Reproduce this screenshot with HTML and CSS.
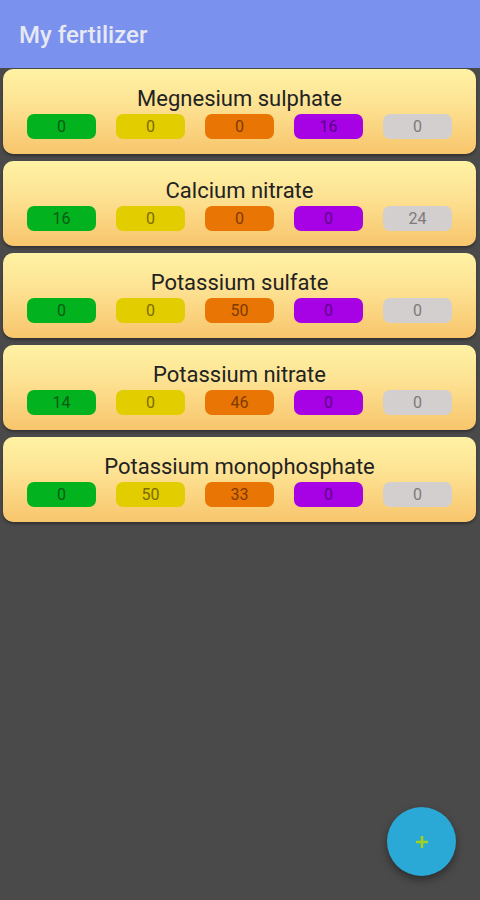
FILE: index.html
```html
<!DOCTYPE html>
<html lang="en">
<head>
    <meta charset="UTF-8">
    <meta name="viewport" content="width=device-width, initial-scale=1.0">
    <title>My fertilizer</title>
    <link rel="stylesheet" href="styles.css">
</head>
<body>
    <header class="app-bar">
        <h1>My fertilizer</h1>
    </header>

    <main class="list">
        <div class="card">
            <div class="card-title">Megnesium sulphate</div>
            <div class="pills">
                <span class="pill green">0</span>
                <span class="pill yellow">0</span>
                <span class="pill orange">0</span>
                <span class="pill purple">16</span>
                <span class="pill grey">0</span>
            </div>
        </div>
        <div class="card">
            <div class="card-title">Calcium nitrate</div>
            <div class="pills">
                <span class="pill green">16</span>
                <span class="pill yellow">0</span>
                <span class="pill orange">0</span>
                <span class="pill purple">0</span>
                <span class="pill grey">24</span>
            </div>
        </div>
        <div class="card">
            <div class="card-title">Potassium sulfate</div>
            <div class="pills">
                <span class="pill green">0</span>
                <span class="pill yellow">0</span>
                <span class="pill orange">50</span>
                <span class="pill purple">0</span>
                <span class="pill grey">0</span>
            </div>
        </div>
        <div class="card">
            <div class="card-title">Potassium nitrate</div>
            <div class="pills">
                <span class="pill green">14</span>
                <span class="pill yellow">0</span>
                <span class="pill orange">46</span>
                <span class="pill purple">0</span>
                <span class="pill grey">0</span>
            </div>
        </div>
        <div class="card">
            <div class="card-title">Potassium monophosphate</div>
            <div class="pills">
                <span class="pill green">0</span>
                <span class="pill yellow">50</span>
                <span class="pill orange">33</span>
                <span class="pill purple">0</span>
                <span class="pill grey">0</span>
            </div>
        </div>
    </main>

    <!-- floating add button -->
    <button class="fab" aria-label="Add fertilizer">
        <svg width="14" height="14" viewBox="0 0 14 14">
            <path d="M7 1v12M1 7h12" stroke="#a4d01e" stroke-width="2.5"/>
        </svg>
    </button>
</body>
</html>
```

FILE: styles.css
```css
body {
    font-family: Roboto, "Liberation Sans", sans-serif;
    background-color: #4a4a4a;
    margin: 0;
    padding: 0;
    width: 480px;
    height: 900px;
    overflow: hidden;
}

.app-bar {
    background-color: #7a91ee;
    height: 68px;
    display: flex;
    align-items: center;
    padding: 2px 19px 0;
    box-sizing: border-box;
}

.app-bar h1 {
    margin: 0;
    font-size: 24px;
    font-weight: 500;
    color: #e6e8f2;
}

.list {
    display: flex;
    flex-direction: column;
    gap: 7px;
    padding: 1px 4px 0 3px;
}

.card {
    background: linear-gradient(to bottom, #fff2a4, #fde394 40%, #f8c56c);
    border-radius: 10px;
    box-shadow: 0 2px 3px rgba(0, 0, 0, 0.35);
    padding: 18px 24px 15px;
    height: 85px;
    box-sizing: border-box;
}

.card-title {
    text-align: center;
    font-size: 22px;
    line-height: 24px;
    color: #222;
    margin-bottom: 3px;
}

.pills {
    display: flex;
    gap: 20px;
}

.pill {
    width: 69px;
    height: 25px;
    border-radius: 7px;
    display: flex;
    align-items: center;
    justify-content: center;
    font-size: 16px;
}

.green {
    background-color: #02b21e;
    color: #0b5a14;
}

.yellow {
    background-color: #e2cd00;
    color: #7d6a00;
}

.orange {
    background-color: #e87504;
    color: #7e3a00;
}

.purple {
    background-color: #a701e6;
    color: #5a0086;
}

.grey {
    background-color: #d3cfcf;
    color: #7e7a7a;
}

.fab {
    position: absolute;
    left: 387px;
    top: 807px;
    width: 69px;
    height: 69px;
    border-radius: 50%;
    border: none;
    background-color: #2aa9d6;
    display: flex;
    align-items: center;
    justify-content: center;
    padding: 0;
    box-shadow: 0 4px 8px rgba(0, 0, 0, 0.4);
}
```
